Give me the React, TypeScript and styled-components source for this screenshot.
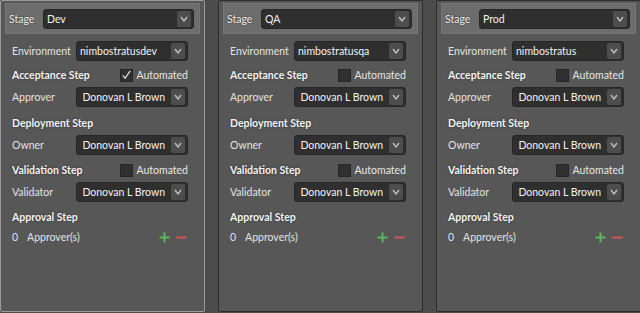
import React from 'react';
import styled, {createGlobalStyle} from 'styled-components';

const GlobalStyle = createGlobalStyle`
  html, body {
    margin: 0;
    padding: 0;
    background: #4c4c4c;
    font-family: 'Lato', 'Liberation Sans', sans-serif;
    overflow: hidden;
  }
`;

const Page = styled.div`
  width: 640px;
  height: 313px;
  display: flex;
  gap: 13px;
  overflow: hidden;
`;

const Panel = styled.div<{ $active?: boolean }>`
  flex: 0 0 205px;
  box-sizing: border-box;
  height: 312px;
  background: #575757;
  border: 1px solid ${p => (p.$active ? '#9a9a9a' : '#2c2c2c')};
  border-radius: 2px;
  padding: 2px 4px 0 4px;
  color: #e8e8e8;
  font-size: 10.5px;
`;

const StageBar = styled.div`
  height: 31px;
  box-sizing: border-box;
  background: #6d6d6d;
  border: 1px solid #767676;
  display: flex;
  align-items: center;
  padding: 0 4px 0 3px;
  gap: 3px;
`;

const StageLabel = styled.span`
  color: #ececec;
  text-shadow: 0 0 2px rgba(0, 0, 0, 0.6);
  width: 31px;
`;

const Body = styled.div`
  padding: 7px 12px 0 7px;
  display: flex;
  flex-direction: column;
`;

const Row = styled.div<{ $gap?: number }>`
  height: 20px;
  display: flex;
  align-items: center;
  justify-content: space-between;
  margin-top: ${p => (p.$gap ?? 2)}px;
`;

const Label = styled.span`
  color: #e2e2e2;
`;

const Heading = styled.span`
  font-weight: 700;
  color: #f4f4f4;
  text-shadow: 0 0 2px rgba(0, 0, 0, 0.5);
`;

const Select = styled.div<{ $width: number }>`
  width: ${p => p.$width}px;
  height: 20px;
  box-sizing: border-box;
  background: #2f2f2f;
  border: 1px solid #262626;
  border-radius: 3px;
  display: flex;
  align-items: center;
  padding: 0 2px 0 3px;
  color: #f2f2f2;
  gap: 6px;
`;

const SelectText = styled.span<{ $right?: boolean }>`
  flex: 1;
  text-align: ${p => (p.$right ? 'right' : 'left')};
  white-space: nowrap;
  overflow: hidden;
`;

const Chevron = styled.span`
  width: 14px;
  height: 16px;
  background: #4d4d4d;
  border-radius: 2px;
  display: flex;
  align-items: center;
  justify-content: center;
`;

const Check = styled.label`
  display: flex;
  align-items: center;
  gap: 4px;
  color: #e6e6e6;
`;

const Box = styled.span`
  width: 13px;
  height: 13px;
  box-sizing: border-box;
  background: #303030;
  border: 1px solid #262626;
  display: flex;
  align-items: center;
  justify-content: center;
`;

const Count = styled.div`
  display: flex;
  gap: 9px;
  color: #e2e2e2;
`;

const Actions = styled.div`
  display: flex;
  gap: 6px;
  align-items: center;
  margin-right: 1px;
`;

const ChevronIcon = () => (
  <Chevron>
    <svg width="8" height="6" viewBox="0 0 8 6">
      <path d="M1 1 L4 5 L7 1" fill="none" stroke="#bdbdbd" strokeWidth="1.4" />
    </svg>
  </Chevron>
);

const Dropdown = ({value, width, right}: { value: string; width: number; right?: boolean }) => (
  <Select $width={width}>
    <SelectText $right={right}>{value}</SelectText>
    <ChevronIcon />
  </Select>
);

const Checkbox = ({checked}: { checked?: boolean }) => (
  <Check>
    <Box>
      {checked && (
        <svg width="12" height="12" viewBox="0 0 12 12">
          <path d="M2 6.5 L4.5 9.5 L10 1.5" fill="none" stroke="#e0e0e0" strokeWidth="1.3" />
        </svg>
      )}
    </Box>
    Automated
  </Check>
);

const Plus = () => (
  <svg width="11" height="11" viewBox="0 0 11 11">
    <path d="M5.5 0.5 V10.5 M0.5 5.5 H10.5" stroke="#5cb85c" strokeWidth="2" />
  </svg>
);

const Minus = () => (
  <svg width="11" height="11" viewBox="0 0 11 11">
    <path d="M0.5 5.5 H10.5" stroke="#d45454" strokeWidth="2" />
  </svg>
);

type Stage = { name: string; env: string; acceptAuto: boolean; active?: boolean };

const stages: Stage[] = [
  {name: 'Dev', env: 'nimbostratusdev', acceptAuto: true, active: true},
  {name: 'QA', env: 'nimbostratusqa', acceptAuto: false},
  {name: 'Prod', env: 'nimbostratus', acceptAuto: false},
];

const StagePanel = ({stage}: { stage: Stage }) => (
  <Panel $active={stage.active}>
    <StageBar>
      <StageLabel>Stage</StageLabel>
      <Dropdown value={stage.name} width={151} />
    </StageBar>
    <Body>
      <Row $gap={0}>
        <Label>Environment</Label>
        <Dropdown value={stage.env} width={112} />
      </Row>
      <Row $gap={4}>
        <Heading>Acceptance Step</Heading>
        <Checkbox checked={stage.acceptAuto} />
      </Row>
      <Row>
        <Label>Approver</Label>
        <Dropdown value="Donovan L Brown" width={112} right />
      </Row>
      <Row $gap={6}>
        <Heading>Deployment Step</Heading>
      </Row>
      <Row>
        <Label>Owner</Label>
        <Dropdown value="Donovan L Brown" width={112} right />
      </Row>
      <Row $gap={5}>
        <Heading>Validation Step</Heading>
        <Checkbox />
      </Row>
      <Row>
        <Label>Validator</Label>
        <Dropdown value="Donovan L Brown" width={112} right />
      </Row>
      <Row $gap={5}>
        <Heading>Approval Step</Heading>
      </Row>
      <Row $gap={0}>
        <Count>
          <span>0</span>
          <span>Approver(s)</span>
        </Count>
        <Actions>
          <Plus />
          <Minus />
        </Actions>
      </Row>
    </Body>
  </Panel>
);

export default function App() {
  return (
    <>
      <GlobalStyle />
      <Page>
        {stages.map(s => (
          <StagePanel key={s.name} stage={s} />
        ))}
      </Page>
    </>
  );
}
